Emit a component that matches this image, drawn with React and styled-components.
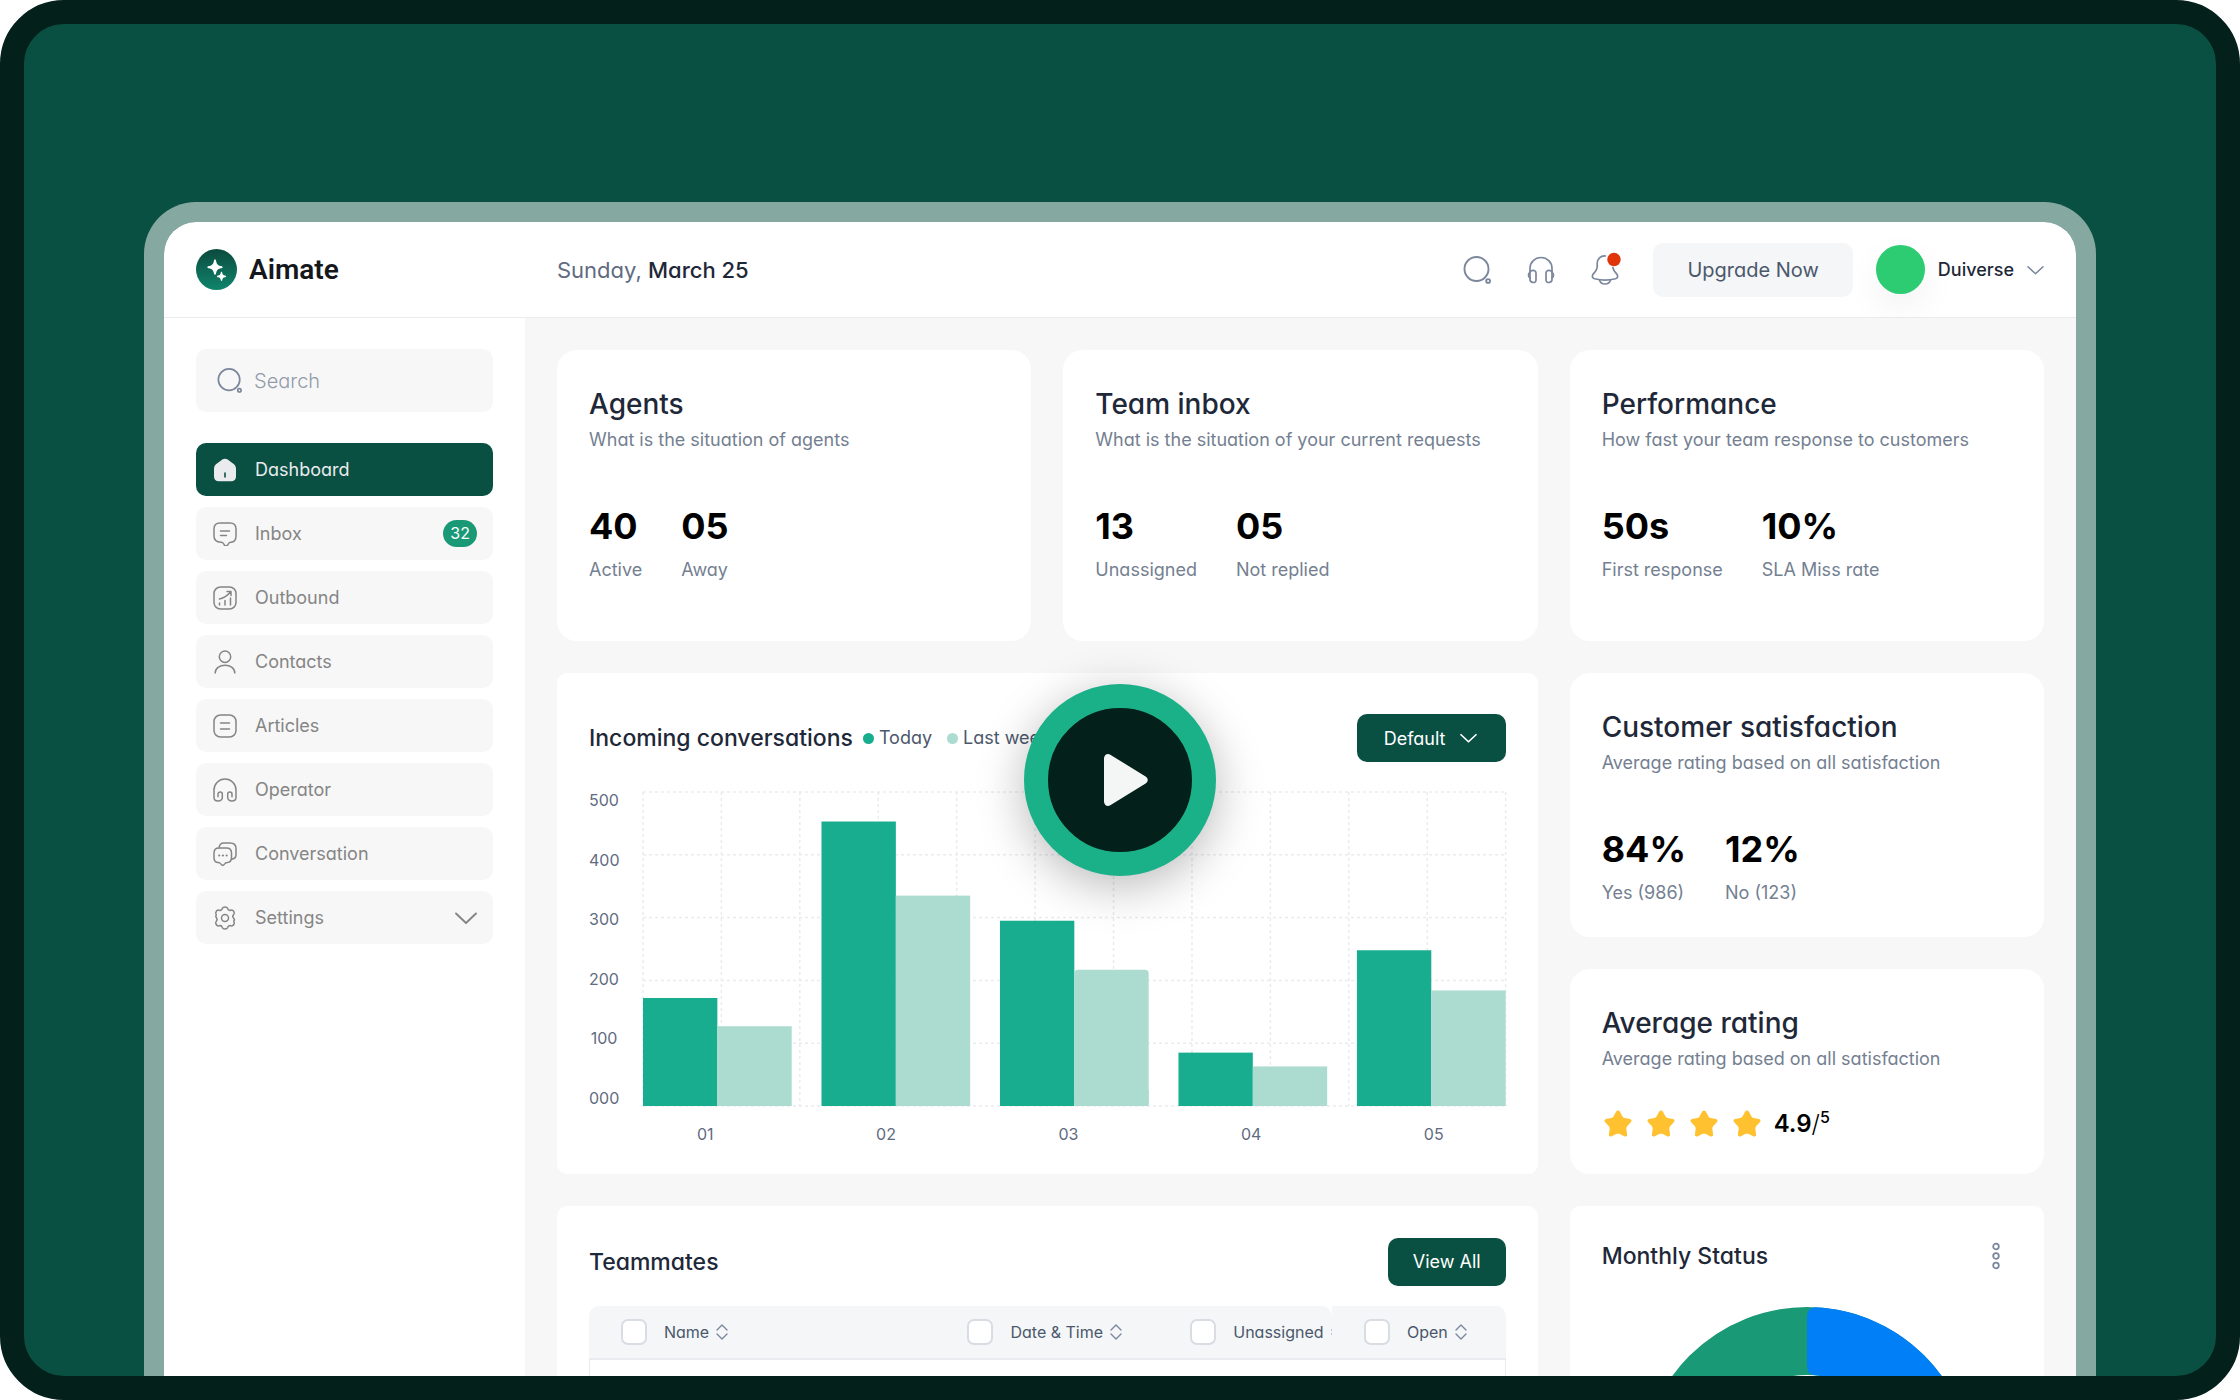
import React from 'react';
import styled, { createGlobalStyle } from 'styled-components';

const c = {
  ink: '#1e2838',
  muted: '#748091',
  slate: '#4b586b',
  axis: '#5f6b7f',
  line: '#e9ebee',
  nav: '#858585',
  iconGray: '#7b879c',
  surface: '#f7f7f7',
  cool: '#f4f6f8',
  forest: '#0a5042',
  night: '#04201b',
  mint: '#18ad8e',
  mintSoft: '#acdbd0',
};

const GlobalStyle = createGlobalStyle`
  *, *::before, *::after { box-sizing: border-box; }
  body { margin: 0; background: #fff; }
  body, button, input, select {
    font-family: Inter, "Liberation Sans", sans-serif;
    font-feature-settings: "cv11";
  }
  h1, h2, p, ul, dl, dd { margin: 0; padding: 0; }
  svg { display: block; flex: none; }
`;

/* ---------- Stage ---------- */

const Stage = styled.div`
  position: relative;
  height: 100vh;
  padding: 178px 120px 0;
  overflow: hidden;
  border: 24px solid ${c.night};
  border-radius: 64px;
  background: ${c.forest};
`;

const Window = styled.div`
  border: 20px solid rgba(255, 255, 255, 0.5);
  border-bottom: 0;
  border-radius: 52px 52px 0 0;
  background: #fff;
  background-clip: padding-box;
  overflow: hidden;
`;

const PlayButton = styled.button`
  position: absolute;
  left: 50%;
  top: calc(50% + 80px);
  translate: -50% -50%;
  display: grid;
  place-items: center;
  width: 192px;
  height: 192px;
  padding: 0;
  border: 24px solid #1ab189;
  border-radius: 50%;
  background: ${c.night};
  box-shadow: 0 10px 48px rgba(0, 0, 0, 0.28);
  cursor: pointer;
`;

/* ---------- Header ---------- */

const Header = styled.header`
  display: flex;
  align-items: center;
  height: 96px;
  padding: 0 32px;
  border-bottom: 1px solid #ebebed;
`;

const Brand = styled.a`
  display: flex;
  align-items: center;
  gap: 12px;
  width: 361px;
  color: #14171c;
  font-family: Roboto, sans-serif;
  font-size: 28px;
  font-weight: 600;
  line-height: 40px;
  text-decoration: none;
`;

const Today = styled.p`
  color: ${c.axis};
  font-size: 22px;
  line-height: 32px;
  strong { color: ${c.ink}; font-weight: 500; }
`;

const HeaderActions = styled.div`
  display: flex;
  align-items: center;
  gap: 23px;
  margin-left: auto;
`;

const IconRow = styled.div`
  display: flex;
  gap: 36px;
  margin-right: 11px;
`;

const IconButton = styled.button`
  display: block;
  padding: 0;
  border: 0;
  background: none;
  color: ${c.iconGray};
  cursor: pointer;
`;

const UpgradeButton = styled.button`
  height: 54px;
  padding: 0 34px;
  border: 0;
  border-radius: 10px;
  background: ${c.cool};
  color: ${c.slate};
  font-size: 20px;
  line-height: 28px;
  cursor: pointer;
`;

const UserButton = styled.button`
  display: flex;
  align-items: center;
  gap: 13px;
  padding: 0;
  border: 0;
  background: none;
  color: ${c.ink};
  font-size: 18px;
  font-weight: 500;
  line-height: 24px;
  cursor: pointer;
  svg { color: ${c.iconGray}; }
`;

const Avatar = styled.span`
  width: 49px;
  height: 49px;
  border-radius: 50%;
  background: #2dcb72;
  box-shadow: 0 14px 36px rgba(0, 0, 0, 0.06);
`;

/* ---------- Sidebar ---------- */

const Body = styled.div`
  display: grid;
  grid-template-columns: 361px minmax(0, 1fr);
`;

const Sidebar = styled.aside`
  padding: 31px 32px;
`;

const SearchBox = styled.label`
  display: flex;
  align-items: center;
  gap: 12px;
  height: 63px;
  padding: 0 21px;
  border-radius: 10px;
  background: ${c.surface};
  color: ${c.iconGray};
`;

const SearchInput = styled.input`
  flex: 1;
  min-width: 0;
  padding: 0;
  border: 0;
  outline: 0;
  background: none;
  color: ${c.ink};
  font-size: 20px;
  font-weight: 300;
  line-height: 28px;
  &::placeholder { color: #929bab; opacity: 1; }
`;

const NavList = styled.ul`
  display: grid;
  gap: 11px;
  margin-top: 31px;
  list-style: none;
`;

const NavLink = styled.a`
  display: flex;
  align-items: center;
  gap: 18px;
  height: 53px;
  padding: 0 16px 0 17px;
  border-radius: 10px;
  background: ${(p) => (p.$active ? c.forest : c.surface)};
  color: ${(p) => (p.$active ? '#e9ebee' : c.nav)};
  font-size: 18px;
  line-height: 24px;
  text-decoration: none;
`;

const NavEnd = styled.span`
  margin-left: auto;
`;

const Badge = styled.span`
  display: block;
  padding: 0 7px;
  border-radius: 14px;
  background: #1a9976;
  color: #fff;
  font-size: 16px;
  line-height: 27px;
`;

/* ---------- Cards ---------- */

const Main = styled.main`
  display: grid;
  grid-template-columns: repeat(3, minmax(0, 1fr));
  gap: 32px;
  padding: 32px;
  background: ${c.surface};
`;

const Card = styled.section`
  padding: ${(p) => p.$pad || '32px'};
  border-radius: ${(p) => (p.$tight ? 10 : 20)}px;
  background: #fff;
`;

const WideCard = styled(Card)`
  grid-column: span 2;
`;

const Stack = styled.div`
  display: grid;
  gap: 32px;
`;

const CardTitle = styled.h2`
  color: ${c.ink};
  font-size: 28px;
  font-weight: 500;
  line-height: 44px;
`;

const CardNote = styled.p`
  color: ${c.muted};
  font-size: 18px;
  line-height: 28px;
`;

const Stats = styled.dl`
  display: flex;
  gap: 39px;
  margin-top: 48px;
`;

const Stat = styled.div`
  display: flex;
  flex-direction: column-reverse;
  gap: 6px;
`;

const StatValue = styled.dd`
  color: #000;
  font-size: 36px;
  font-weight: 700;
  line-height: 48px;
`;

const StatLabel = styled.dt`
  color: ${c.muted};
  font-size: 18px;
  line-height: 28px;
`;

const Rating = styled.div`
  display: flex;
  align-items: center;
  gap: 11px;
  height: 32px;
  margin-top: 35px;
`;

const Score = styled.p`
  color: #000;
  font-size: 24px;
  font-weight: 600;
  line-height: 32px;
  span { font-weight: 300; }
  sup { font-size: 16px; font-weight: 500; line-height: 1; }
`;

const SectionHead = styled.div`
  display: flex;
  align-items: center;
  height: ${(p) => p.$height || 48}px;
`;

const SectionTitle = styled.h2`
  color: ${c.ink};
  font-size: 23px;
  font-weight: 500;
  line-height: 32px;
`;

/* ---------- Chart ---------- */

const Legend = styled.ul`
  display: flex;
  gap: 15px;
  margin-left: 10px;
  color: ${c.slate};
  font-size: 18px;
  line-height: 28px;
  list-style: none;
`;

const LegendItem = styled.li`
  display: flex;
  align-items: center;
  gap: 5px;
  white-space: nowrap;
  &::before {
    content: '';
    width: 11px;
    height: 11px;
    border-radius: 50%;
    background: ${(p) => p.$color};
  }
`;

const SelectWrap = styled.div`
  position: relative;
  margin-left: auto;
  color: #fff;
  svg {
    position: absolute;
    top: 16px;
    right: 29px;
    pointer-events: none;
  }
`;

const RangeSelect = styled.select`
  width: 149px;
  height: 48px;
  padding: 0 0 0 27px;
  appearance: none;
  border: 0;
  border-radius: 10px;
  background: ${c.forest};
  color: inherit;
  font-size: 18px;
  cursor: pointer;
`;

const ChartGrid = styled.div`
  display: grid;
  grid-template-columns: 30px minmax(0, 1fr);
  column-gap: 24px;
  row-gap: 14px;
  align-items: center;
  margin-top: 28px;
  color: ${c.axis};
  font-size: 16px;
`;

const YAxis = styled.div`
  display: flex;
  flex-direction: column;
  justify-content: space-between;
  height: 318px;
  line-height: 20px;
  text-align: center;
`;

const XAxis = styled.div`
  grid-column: 2;
  display: flex;
  justify-content: space-between;
  padding: 0 62px 0 54px;
  line-height: 24px;
`;

/* ---------- Table ---------- */

const PrimaryButton = styled.button`
  height: 48px;
  margin-left: auto;
  padding: 0 25px;
  border: 0;
  border-radius: 10px;
  background: ${c.forest};
  color: #fff;
  font-size: 18px;
  line-height: 24px;
  cursor: pointer;
`;

const TableFrame = styled.div`
  margin-top: 20px;
  overflow: hidden;
  border-radius: 10px;
`;

const Table = styled.table`
  width: 100%;
  table-layout: fixed;
  border-collapse: separate;
  border-spacing: 0;
`;

const HeadCell = styled.th`
  width: ${(p) => p.$width};
  height: 54px;
  padding: 0 0 0 32px;
  overflow: hidden;
  border-bottom: 2px solid #e8ebef;
  border-top-right-radius: ${(p) => (p.$notch ? 10 : 0)}px;
  background: ${c.cool};
`;

const HeadContent = styled.div`
  display: flex;
  align-items: center;
  gap: 7px;
  svg { color: ${c.iconGray}; }
`;

const HeadLabel = styled.label`
  display: flex;
  align-items: center;
  gap: 17px;
  color: ${c.slate};
  font-size: 16px;
  font-weight: 400;
  line-height: 24px;
  white-space: nowrap;
`;

const Check = styled.input`
  flex: none;
  width: 26px;
  height: 26px;
  margin: 0;
  appearance: none;
  border: 2px solid #d9dce3;
  border-radius: 7px;
  background: #fff;
`;

const BodyCell = styled.td`
  height: 72px;
  border-bottom: 1px solid #e8ebef;
  &:first-child { border-left: 1px solid #e8ebef; }
  &:last-child { border-right: 1px solid #e8ebef; }
`;

const DonutWrap = styled.div`
  display: flex;
  justify-content: center;
  margin-top: 33px;
`;

const MoreButton = styled(IconButton)`
  margin: 0 12px 0 auto;
`;

/* ---------- Icons ---------- */

const Line = ({ size = 24, box = 24, width = 1.5, children }) => (
  <svg width={size} height={size} viewBox={`0 0 ${box} ${box}`} fill="none" stroke="currentColor"
    strokeWidth={width} strokeLinecap="round" strokeLinejoin="round" aria-hidden="true">
    {children}
  </svg>
);

const SearchIcon = ({ size }) => (
  <Line size={size} box={28} width={1.9}>
    <circle cx="13.5" cy="13" r="12" />
    <circle cx="25.1" cy="25" r="1.9" />
  </Line>
);

const HeadphonesIcon = () => (
  <Line size={28} box={28} width={1.7}>
    <path d="M3 15v-2.500a11 11 0 0 1 22 0V15" />
    <path d="M3 15.500c3.500-2 6-1 6 1.500v7c0 2.200-2 2.800-3.500 2.300C3.800 26 3 25 3 23.500z" />
    <path d="M25 15.500c-3.500-2-6-1-6 1.500v7c0 2.200 2 2.800 3.500 2.300 1.700-.3 2.500-1.300 2.500-2.800z" />
    <path d="M3 16.500c-2 1-2 4.500 0 5.500M25 16.500c2 1 2 4.500 0 5.500" />
  </Line>
);

const BellIcon = () => (
  <svg width="28" height="30" viewBox="0 0 28 30" fill="none" stroke="currentColor" strokeWidth="1.700"
    strokeLinecap="round" strokeLinejoin="round" overflow="visible" aria-hidden="true">
    <path d="M14.500 1C9.500.6 6.200 4 6.200 8.500v3.300c0 1.500-.5 2.600-1.500 4.200l-2.900 3.600c-1 1.800-.3 3.600 1.700 4.200 6.700 1.800 14.300 1.800 21 0 2-.6 2.800-2.400 1.700-4.200l-2.900-3.600c-.8-1.300-1.200-2.300-1.400-3.500" />
    <path d="M8.500 25c.6 2.400 2.900 4 5.500 4s4.900-1.600 5.500-4" />
    <circle cx="23" cy="4.500" r="6.700" fill="#e0340b" stroke="none" />
  </svg>
);

const ChevronIcon = ({ width, stroke = 1.6 }) => (
  <svg width={width} height={16} viewBox={`0 0 ${width} 16`} fill="none" stroke="currentColor"
    strokeWidth={stroke} strokeLinecap="round" strokeLinejoin="round" aria-hidden="true">
    <path d={`M1 ${8 - width / 4 + 1} L${width / 2} ${8 + width / 4 - 0.5} L${width - 1} ${8 - width / 4 + 1}`} />
  </svg>
);

const LogoMark = () => (
  <svg width="41" height="41" viewBox="0 0 41 41" aria-hidden="true">
    <defs>
      <linearGradient id="brandFill" x1="0" y1="0" x2="0" y2="1">
        <stop offset="0" stopColor="#0b4a3e" />
        <stop offset="1" stopColor="#10856c" />
      </linearGradient>
    </defs>
    <circle cx="20.500" cy="20.500" r="20.500" fill="url(#brandFill)" />
    <path fill="#fff" d="M19 10.500c.6 0 .9.500 1.100 1.400.8 3.400 1.600 4.400 5 5.200.9.200 1.500.5 1.500 1.100s-.6.900-1.500 1.100c-3.400.8-4.200 1.600-5 5-.2.900-.5 1.500-1.100 1.500s-.9-.6-1.100-1.500c-.8-3.400-1.600-4.200-5-5-.9-.2-1.500-.5-1.500-1.100s.6-.9 1.500-1.100c3.400-.8 4.200-1.800 5-5.200.2-.9.500-1.400 1.100-1.400z" />
    <path fill="#fff" d="M25.500 22.800c.4 0 .6.300.8 1.200.4 1.700.9 2.200 2.600 2.600.8.200 1.100.4 1.100.8s-.3.600-1.100.8c-1.700.4-2.200.9-2.600 2.600-.2.800-.4 1.200-.8 1.200s-.6-.4-.8-1.200c-.4-1.700-.9-2.200-2.600-2.600-.8-.2-1.100-.4-1.100-.8s.3-.6 1.100-.8c1.700-.4 2.200-.9 2.600-2.600.2-.9.400-1.200.8-1.200z" />
  </svg>
);

const HomeIcon = () => (
  <svg width="24" height="24" viewBox="0 0 24 24" fill="currentColor" fillRule="evenodd" aria-hidden="true">
    <path d="M9.700 1.300c1.400-.9 3.200-.9 4.600 0l5.700 4.200c1.900 1.200 3 3 3 5.200v7.500c0 3.300-1.700 5-5 5H6c-3.300 0-5-1.700-5-5v-7.500c0-2.200 1.100-4 3-5.200zM11.200 15v4c0 .9 1.600.9 1.600 0v-4c0-.9-1.600-.9-1.600 0z" />
  </svg>
);

const InboxIcon = () => (
  <Line>
    <path d="M7 1h10c4 0 6 2 6 6v7c0 4-1.600 6-5 6.200-1.700.1-2 .3-2.500 1.300l-.8 1.500c-.9 1.300-2.500 1.300-3.400 0l-.8-1.500c-.5-1-.8-1.200-2.500-1.300C2.600 20 1 18 1 14V7c0-4 2-6 6-6z" />
    <path d="M7.500 9h9M7.500 13.500h6" />
  </Line>
);

const OutboundIcon = () => (
  <Line>
    <rect x="1" y="1" width="22" height="22" rx="6.500" />
    <path d="M6.500 17v2M12 14.500V19M17.500 12v7M6.500 13c4.800-1.200 8-3.400 11.200-7.300M14 5.500h4v4" />
  </Line>
);

const ContactsIcon = () => (
  <Line>
    <circle cx="12" cy="6.700" r="5.700" />
    <path d="M2.200 23c0-4.500 4.300-7.700 9.800-7.700s9.800 3.200 9.800 7.700" />
  </Line>
);

const ArticlesIcon = () => (
  <Line>
    <rect x="1" y="1" width="22" height="22" rx="6.500" />
    <path d="M7.500 9h9M7.500 15h9" />
  </Line>
);

const OperatorIcon = () => (
  <Line>
    <path d="M9.300 20.500v-4.300c0-2.800-4.300-2.800-4.300 0v2.600M9.300 19.500c0 4.800-8.300 4.500-8.300 0V12a11 11 0 0 1 22 0v7.500c0 4.500-8.300 4.800-8.300 0v-3.300c0-2.800 4.300-2.800 4.300 0v2.600" />
  </Line>
);

const ConversationIcon = () => (
  <Line>
    <path d="M6 6c.3-3.500 1.800-5 5-5h6c4 0 6 1.800 6 5.500v6c0 2.800-1.300 4.500-4.500 4.700" />
    <path d="M6 6h7.500c3.300 0 5 1.600 5 5v4.500c0 3.300-1.300 4.800-4.200 5-1.200 0-1.800.3-2.400 1.100l-.8 1c-.8 1-2 1-2.700 0l-.8-1c-.6-.8-1.200-1-2.400-1.100-2.900 0-4.200-1.500-4.200-5V11c0-3.400 1.700-5 5-5z" />
    <path strokeWidth="2.200" d="M6.200 13.500h.01M9.900 13.500h.01M13.600 13.500h.01" />
  </Line>
);

const gearPath = 'M9.300 2.600C9.700 1.500 10.600 1 12 1s2.300.5 2.700 1.600c.5 1.500 1.700 2.100 3.200 1.600 1.200-.3 2.200.1 2.900 1.300.8 1.300.7 2.400-.1 3.200-1.300 1-1.300 2-.2 3.300 1.300 1.300 1.300 2.200.2 3.300.8.800.9 1.900.1 3.200-.7 1.200-1.700 1.600-2.900 1.300-1.500-.5-2.700.1-3.200 1.600-.4 1.100-1.300 1.600-2.700 1.600s-2.300-.5-2.700-1.600c-.5-1.500-1.700-2.100-3.200-1.600-1.200.3-2.200-.1-2.900-1.300-.8-1.300-.7-2.400.1-3.200 1.100-1.100 1.100-2 .2-3.300-.9-1.300-1.100-2.300-.2-3.300-.8-.8-.9-1.900-.1-3.200.7-1.200 1.700-1.600 2.900-1.300 1.500.5 2.700-.1 3.200-1.600z';

const SettingsIcon = () => (
  <Line>
    <path d={gearPath} />
    <circle cx="12" cy="12" r="3.500" />
  </Line>
);

const SortIcon = () => (
  <svg width="12" height="16" viewBox="0 0 12 16" fill="none" stroke="currentColor" strokeWidth="1.400"
    strokeLinecap="round" strokeLinejoin="round" aria-hidden="true">
    <path d="M1 6l5-5 5 5M1 10l5 5 5-5" />
  </svg>
);

const MoreIcon = () => (
  <svg width="8" height="28" viewBox="0 0 8 28" fill="none" stroke="currentColor" strokeWidth="1.800" aria-hidden="true">
    <circle cx="4" cy="4.500" r="2.800" />
    <circle cx="4" cy="14" r="2.800" />
    <circle cx="4" cy="23.500" r="2.800" />
  </svg>
);

const StarIcon = () => (
  <svg width="32" height="32" viewBox="0 0 32 32" fill="#ffc12f" aria-hidden="true">
    <path d="M14.200 3.600c.8-1.400 2.800-1.400 3.600 0l2.700 5c.4.700 1.300 1.300 2.200 1.500l5.300 1c1.500.3 2 1.900 1 3l-3.900 4.200c-.6.700-.9 1.500-.8 2.400l.8 5.900c.2 1.500-1.100 2.400-2.500 1.800l-4.700-2.300c-1.200-.6-2.600-.6-3.800 0l-4.700 2.300c-1.400.6-2.700-.3-2.500-1.800l.8-5.900c.1-.9-.2-1.700-.8-2.400L3 14.100c-1-1.100-.5-2.700 1-3l5.300-1c.9-.2 1.800-.8 2.200-1.500z" />
  </svg>
);

const PlayIcon = () => (
  <svg width="64" height="64" viewBox="0 0 64 64" fill="#f4f6f6" aria-hidden="true">
    <path d="M16 10.500c0-3.500 3.300-5.600 6.300-3.800l35.300 21.800c2.800 1.800 2.800 5.200 0 7L22.300 57.300c-3 1.800-6.300-.3-6.300-3.800z" />
  </svg>
);

/* ---------- Data ---------- */

const navItems = [
  { label: 'Dashboard', icon: HomeIcon, active: true },
  { label: 'Inbox', icon: InboxIcon, count: 32 },
  { label: 'Outbound', icon: OutboundIcon },
  { label: 'Contacts', icon: ContactsIcon },
  { label: 'Articles', icon: ArticlesIcon },
  { label: 'Operator', icon: OperatorIcon },
  { label: 'Conversation', icon: ConversationIcon },
  { label: 'Settings', icon: SettingsIcon, expandable: true },
];

const overview = [
  { title: 'Agents', note: 'What is the situation of agents', stats: [['40', 'Active'], ['05', 'Away']] },
  { title: 'Team inbox', note: 'What is the situation of your current requests', stats: [['13', 'Unassigned'], ['05', 'Not replied']] },
  { title: 'Performance', note: 'How fast your team response to customers', stats: [['50s', 'First response'], ['10%', 'SLA Miss rate']] },
];

const bars = [
  { day: '01', today: 172, week: 127 },
  { day: '02', today: 453, week: 335 },
  { day: '03', today: 295, week: 217, rounded: true },
  { day: '04', today: 85, week: 63 },
  { day: '05', today: 248, week: 184 },
];

const columns = [
  { label: 'Name', width: '37.8%' },
  { label: 'Date & Time', width: '24.3%' },
  { label: 'Unassigned', width: '18.95%', notch: true },
  { label: 'Open', width: '18.95%' },
];

/* ---------- Parts ---------- */

const StatCard = ({ title, note, stats, pad }) => (
  <Card $pad={pad}>
    <CardTitle>{title}</CardTitle>
    <CardNote>{note}</CardNote>
    <Stats>
      {stats.map(([value, label]) => (
        <Stat key={label}>
          <StatLabel>{label}</StatLabel>
          <StatValue>{value}</StatValue>
        </Stat>
      ))}
    </Stats>
  </Card>
);

const BarPlot = () => {
  const barWidth = 8.62;
  const step = (100 - barWidth * 2) / (bars.length - 1);
  return (
    <svg width="100%" height="314" overflow="visible" role="img" aria-label="Incoming conversations by day">
      <g stroke={c.line} strokeWidth="1.500" strokeDasharray="3 3">
        {Array.from({ length: 6 }, (_, i) => (
          <line key={`h${i}`} x1="0" x2="100%" y1={`${i * 20}%`} y2={`${i * 20}%`} />
        ))}
        {Array.from({ length: 12 }, (_, i) => (
          <line key={`v${i}`} y1="0" y2="100%" x1={`${(i * 100) / 11}%`} x2={`${(i * 100) / 11}%`} />
        ))}
      </g>
      {bars.map((b, i) => (
        <g key={b.day}>
          <rect x={`${i * step}%`} y={`${100 - b.today / 5}%`} width={`${barWidth}%`} height={`${b.today / 5}%`} fill={c.mint} />
          <rect x={`${i * step + barWidth}%`} y={`${100 - b.week / 5}%`} width={`${barWidth}%`} height={`${b.week / 5}%`}
            rx={b.rounded ? 4 : 0} fill={c.mintSoft} />
          {b.rounded && (
            <rect x={`${i * step + barWidth}%`} y="95%" width={`${barWidth}%`} height="5%" fill={c.mintSoft} />
          )}
        </g>
      ))}
    </svg>
  );
};

const Donut = () => (
  <svg width="332" height="332" viewBox="0 0 332 332" role="img" aria-label="Monthly status">
    <circle cx="166" cy="166" r="132" fill="none" stroke="#1a9976" strokeWidth="68" />
    <path fill="#007ff7" d="M174 .2A166 166 0 0 1 309.800 249L250.900 215A98 98 0 0 0 174 68.300Q166 68 166 58V10Q166 1 174 .2z" />
  </svg>
);

export default function App() {
  return (
    <>
      <GlobalStyle />
      <Stage>
        <Window>
          <Header>
            <Brand href="#">
              <LogoMark />
              Aimate
            </Brand>
            <Today>Sunday, <strong>March 25</strong></Today>
            <HeaderActions>
              <IconRow>
                <IconButton aria-label="Search"><SearchIcon size={28} /></IconButton>
                <IconButton aria-label="Support"><HeadphonesIcon /></IconButton>
                <IconButton aria-label="Notifications"><BellIcon /></IconButton>
              </IconRow>
              <UpgradeButton>Upgrade Now</UpgradeButton>
              <UserButton>
                <Avatar />
                Duiverse
                <ChevronIcon width={17} />
              </UserButton>
            </HeaderActions>
          </Header>
          <Body>
            <Sidebar>
              <SearchBox>
                <SearchIcon size={25} />
                <SearchInput type="text" placeholder="Search" aria-label="Search" />
              </SearchBox>
              <nav>
                <NavList>
                  {navItems.map(({ label, icon: Icon, active, count, expandable }) => (
                    <li key={label}>
                      <NavLink href="#" $active={active}>
                        <Icon />
                        {label}
                        {count && <NavEnd><Badge>{count}</Badge></NavEnd>}
                        {expandable && <NavEnd><ChevronIcon width={22} stroke={1.9} /></NavEnd>}
                      </NavLink>
                    </li>
                  ))}
                </NavList>
              </nav>
            </Sidebar>
            <Main>
              {overview.map((item) => (
                <StatCard key={item.title} {...item} pad="32px 32px 57px" />
              ))}

              <WideCard $tight $pad="41px 32px 28px">
                <SectionHead>
                  <SectionTitle>Incoming conversations</SectionTitle>
                  <Legend>
                    <LegendItem $color={c.mint}>Today</LegendItem>
                    <LegendItem $color={c.mintSoft}>Last week</LegendItem>
                  </Legend>
                  <SelectWrap>
                    <RangeSelect aria-label="Range" defaultValue="Default">
                      <option>Default</option>
                    </RangeSelect>
                    <ChevronIcon width={17} stroke={1.7} />
                  </SelectWrap>
                </SectionHead>
                <ChartGrid>
                  <YAxis>
                    {['500', '400', '300', '200', '100', '000'].map((v) => <span key={v}>{v}</span>)}
                  </YAxis>
                  <BarPlot />
                  <XAxis>
                    {bars.map((b) => <span key={b.day}>{b.day}</span>)}
                  </XAxis>
                </ChartGrid>
              </WideCard>

              <Stack>
                <StatCard
                  title="Customer satisfaction"
                  note="Average rating based on all satisfaction"
                  stats={[['84%', 'Yes (986)'], ['12%', 'No (123)']]}
                  pad="32px 32px 30px"
                />
                <Card $pad="32px 32px 34px">
                  <CardTitle>Average rating</CardTitle>
                  <CardNote>Average rating based on all satisfaction</CardNote>
                  <Rating>
                    <StarIcon /><StarIcon /><StarIcon /><StarIcon />
                    <Score>4.9<span>/</span><sup>5</sup></Score>
                  </Rating>
                </Card>
              </Stack>

              <WideCard $tight>
                <SectionHead>
                  <SectionTitle>Teammates</SectionTitle>
                  <PrimaryButton>View All</PrimaryButton>
                </SectionHead>
                <TableFrame>
                  <Table>
                    <thead>
                      <tr>
                        {columns.map((col) => (
                          <HeadCell key={col.label} $width={col.width} $notch={col.notch}>
                            <HeadContent>
                              <HeadLabel>
                                <Check type="checkbox" />
                                {col.label}
                              </HeadLabel>
                              <SortIcon />
                            </HeadContent>
                          </HeadCell>
                        ))}
                      </tr>
                    </thead>
                    <tbody>
                      <tr>
                        {columns.map((col) => <BodyCell key={col.label} />)}
                      </tr>
                    </tbody>
                  </Table>
                </TableFrame>
              </WideCard>

              <Card $tight>
                <SectionHead $height={36}>
                  <SectionTitle>Monthly Status</SectionTitle>
                  <MoreButton aria-label="More options"><MoreIcon /></MoreButton>
                </SectionHead>
                <DonutWrap><Donut /></DonutWrap>
              </Card>
            </Main>
          </Body>
        </Window>
        <PlayButton aria-label="Play video"><PlayIcon /></PlayButton>
      </Stage>
    </>
  );
}
